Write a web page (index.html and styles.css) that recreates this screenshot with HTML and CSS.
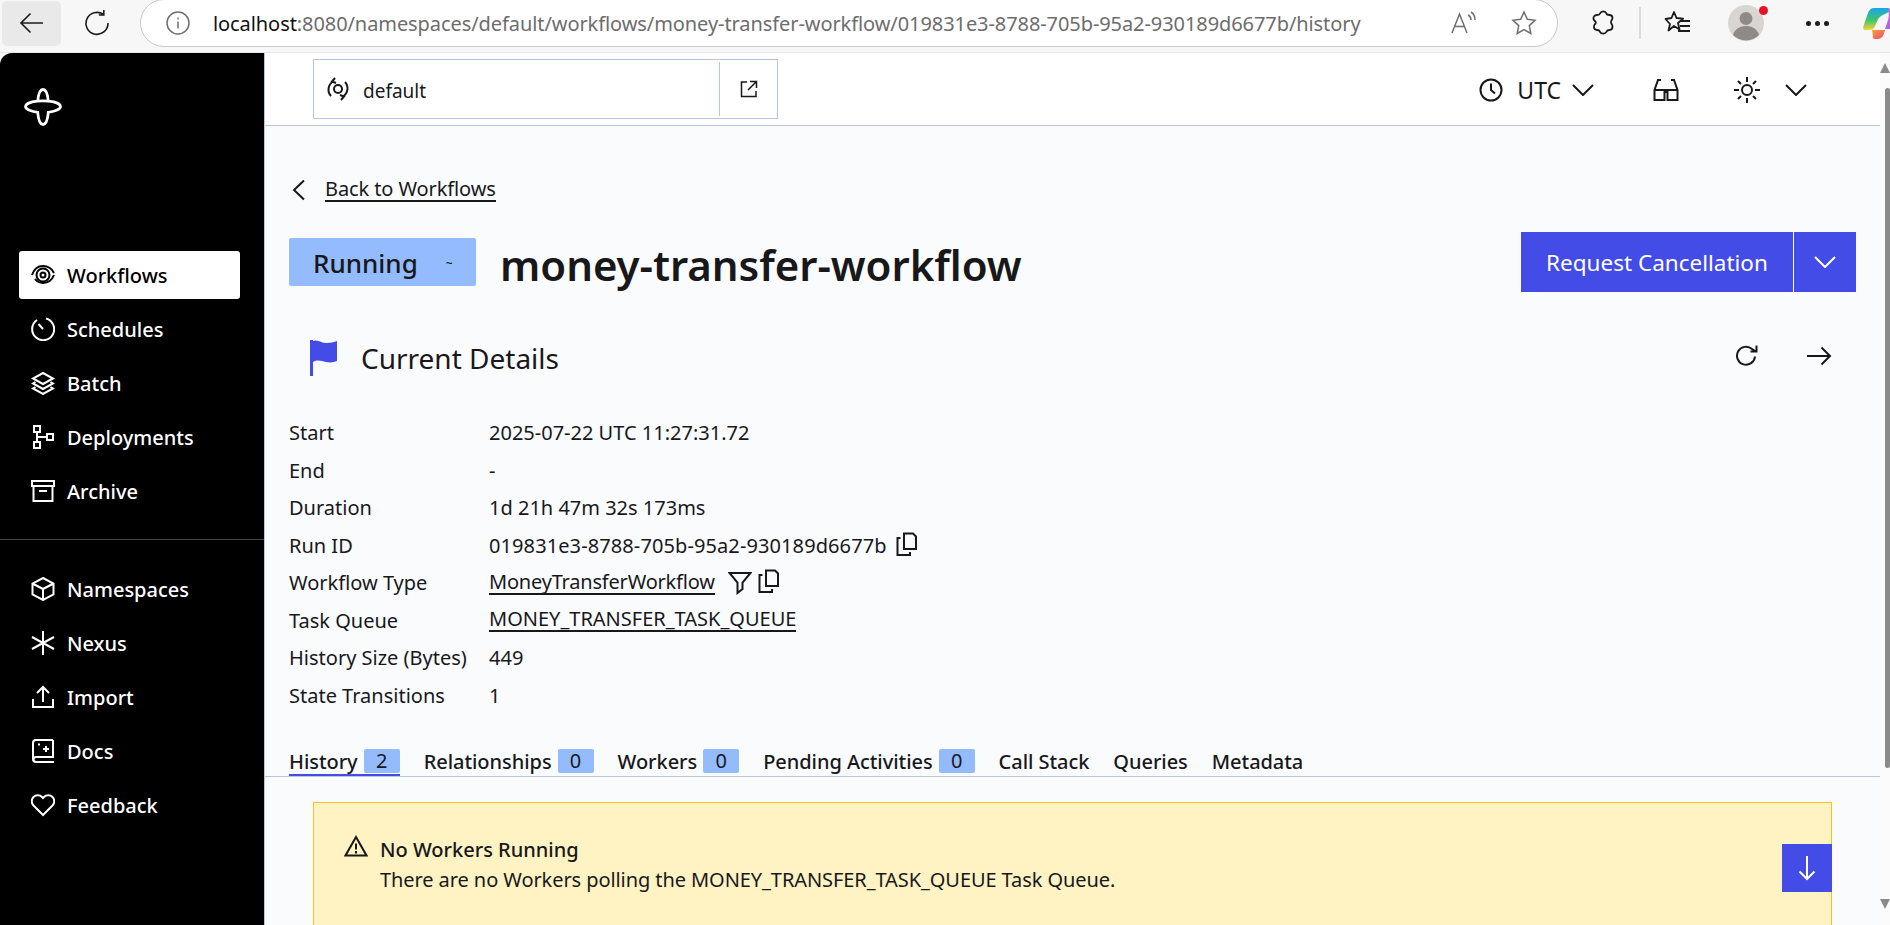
FILE: index.html
```html
<!DOCTYPE html>
<html lang="en">
<head>
<meta charset="utf-8">
<title>money-transfer-workflow</title>
<link rel="stylesheet" href="styles.css">
</head>
<body>
<div class="app">
  <header class="chrome">
    <button class="chrome-back"><svg width="28" height="28" viewBox="0 0 28 28"><path d="M25 14H3M12.500 4.500 3 14l9.500 9.500" class="ln-thin"/></svg></button>
    <span class="chrome-reload"><svg width="28" height="28" viewBox="0 0 28 28"><path d="M20.500 5.500A11 11 0 1 0 25 14M20.800 1v5h-5" class="ln-thin"/></svg></span>
    <div class="urlbar">
      <svg class="url-info" width="24" height="24" viewBox="0 0 24 24"><circle cx="12" cy="12" r="11" class="ln-gray"/><path d="M12 10.500v7M12 6.500v2" class="ln-gray"/></svg>
      <span class="url-text"><b>localhost</b>:8080/namespaces/default/workflows/money-transfer-workflow/019831e3-8788-705b-95a2-930189d6677b/history</span>
      <svg class="url-read" width="26" height="24" viewBox="0 0 26 24"><path d="M1 22 8.500 3 16 22M3.800 15.500h9.400M17 4c2 1 3 2.500 3 5M20 1c2.500 1.500 4 4 4 8" class="ln-gray"/></svg>
      <svg class="url-star" width="26" height="26" viewBox="0 0 26 26"><path d="m13 2 3.300 7.300 7.700.9-5.700 5.400 1.500 7.900L13 19.600l-6.800 3.900 1.500-7.900L2 10.200l7.700-.9z" class="ln-gray"/></svg>
    </div>
    <div class="chrome-tools">
      <svg class="tool-puzzle" width="24" height="28" viewBox="0 0 24 28"><path d="M9 4.500a3.500 3.500 0 0 1 6.500 0c.4 1.500 1.500 1.500 3 1.500 2 0 3 1 3 3s-1.500 2-1.500 4 1.500 2.500 1.500 4.500-1 3.500-3 3.500c-1.500 0-2.500.5-3 1.800-1 2.500-5.500 2.500-6.500 0-.5-1.300-1.500-1.800-3-1.800-2 0-3.500-1.500-3-4 .3-1.700 1.800-2 1.800-3.500S3 12 2.500 10 3.500 6 6 6c1.500 0 2.600-.2 3-1.500z" class="ln-dark"/></svg>
      <span class="tool-sep"></span>
      <svg class="tool-fav" width="28" height="28" viewBox="0 0 28 28"><path d="m10 3 2.500 6 6.500.7-5 4.300 1.500 6.500L10 17l-5.500 4.500L6 15 1.500 10 7.500 9zM17 12h9M16 17h10M14 22h12" class="ln-dark"/></svg>
      <span class="avatar"><svg width="36" height="36" viewBox="0 0 36 36"><circle cx="18" cy="18" r="18" fill="#d8d5d2"/><circle cx="18" cy="13.500" r="6.500" fill="#8f8a86"/><path d="M5 30c2-7 8-9 13-9s11 2 13 9a18 18 0 0 1-26 0z" fill="#8f8a86"/></svg><i class="avatar-dot"></i></span>
      <span class="tool-more"><i></i><i></i><i></i></span>
      <svg class="copilot" width="34" height="32" viewBox="0 0 34 32"><defs><linearGradient id="cp1" x1="0" y1="0" x2="0" y2="1"><stop offset="0" stop-color="#1aa3f0"/><stop offset=".55" stop-color="#3fc56b"/><stop offset="1" stop-color="#f4d43c"/></linearGradient><linearGradient id="cp2" x1="0" y1="0" x2="1" y2="1"><stop offset="0" stop-color="#ec6fc0"/><stop offset="1" stop-color="#8a5bf0"/></linearGradient><linearGradient id="cp3" x1="0" y1="0" x2="1" y2="1"><stop offset="0" stop-color="#f6a03c"/><stop offset="1" stop-color="#f04a6a"/></linearGradient></defs><path d="M11 1h14c2 0 2 2 1 4l-8 4c-3 2-4 5-6 10-1 3-3 4-6 4H2c-2 0-2-2-1.500-4L5 6c1-3 3-5 6-5z" fill="url(#cp1)"/><path d="M25 1c3 1 5 3 6 6l3 11c.5 2-1 4-3 4h-9l3-9c1-3 1-9 0-12z" fill="url(#cp2)"/><path d="M9 23h13c-1 5-3 9-7 9h-3c-2 0-3-2-2-3z" fill="url(#cp3)"/></svg>
    </div>
  </header>

  <div class="layout">
    <aside class="sidebar">
      <div class="logo"><svg width="38" height="38" viewBox="0 0 38 38"><path d="M19 1.500c3.500 0 4.800 6 5.300 11.700 5.700.5 12.200 2.300 12.200 5.300s-6.500 5.300-12.200 5.800c-.5 5.700-1.800 12.200-5.300 12.200s-4.800-6.500-5.300-12.200C8 23.800 1.500 21.500 1.500 18.500s6.500-4.800 12.200-5.300c.5-5.700 1.800-11.700 5.300-11.700zM13.700 13.200c3.400-.4 7.200-.4 10.600 0" class="ln-logo"/></svg></div>
      <nav class="nav">
        <a class="nav-item active"><svg class="nav-icon" width="24" height="24" viewBox="0 0 24 24"><path d="M1 12C3 6 7 3 12 3s9 3 11 7" class="ln"/><path d="M23 12c-2 5-6 8-11 8-3 0-6-1.500-8-4" class="ln"/><circle cx="12" cy="12" r="6.500" class="ln"/><circle cx="12" cy="12" r="2.500" class="ln"/></svg>Workflows</a>
        <a class="nav-item"><svg class="nav-icon" width="24" height="24" viewBox="0 0 24 24"><path d="M15 1.500A11 11 0 1 1 6 3M7.500 7l4.500 5" class="ln"/></svg>Schedules</a>
        <a class="nav-item"><svg class="nav-icon" width="24" height="24" viewBox="0 0 24 24"><path d="m12 2 10 5.500-10 5.500L2 7.500zM4.500 11 2 12.500 12 18l10-5.500-2.500-1.500M4.500 16 2 17.500 12 23l10-5.500-2.500-1.500" class="ln"/></svg>Batch</a>
        <a class="nav-item"><svg class="nav-icon" width="24" height="24" viewBox="0 0 24 24"><path d="M3 1h6v6H3zM3 17h6v6H3zM16 9h6v6h-6zM6 7v10M6 12h10" class="ln"/></svg>Deployments</a>
        <a class="nav-item"><svg class="nav-icon" width="24" height="24" viewBox="0 0 24 24"><path d="M1 2h22v5H1zM2.500 7v15h19V7M8 12h8" class="ln"/></svg>Archive</a>
      </nav>
      <div class="nav-divider"></div>
      <nav class="nav">
        <a class="nav-item"><svg class="nav-icon" width="24" height="24" viewBox="0 0 24 24"><path d="m12 1 10.500 5.500v11L12 23 1.500 17.500v-11zM1.500 6.500 12 12l10.500-5.500M12 12v11" class="ln"/></svg>Namespaces</a>
        <a class="nav-item"><svg class="nav-icon" width="24" height="24" viewBox="0 0 24 24"><path d="M12 0v24M1 6l22 12M23 6 1 18" class="ln"/></svg>Nexus</a>
        <a class="nav-item"><svg class="nav-icon" width="24" height="24" viewBox="0 0 24 24"><path d="M12 17V2M6 8l6-6 6 6M2 14v8h20v-8" class="ln"/></svg>Import</a>
        <a class="nav-item"><svg class="nav-icon" width="24" height="24" viewBox="0 0 24 24"><path d="M22 1H5a3 3 0 0 0-3 3v16a3 3 0 0 0 3 3h18M22 1v17H5a2.500 2.500 0 0 0 0 5M15 7v6M12 10h6M8 4.500v2" class="ln"/></svg>Docs</a>
        <a class="nav-item"><svg class="nav-icon" width="24" height="24" viewBox="0 0 24 24"><path d="M12 22 2.500 12.500a6 6 0 0 1 0-8.500 6 6 0 0 1 8.500 0l1 1 1-1a6 6 0 0 1 8.500 8.500z" class="ln"/></svg>Feedback</a>
      </nav>
    </aside>

    <main class="main">
      <div class="topbar">
        <div class="ns-box">
          <div class="ns-name">
            <svg width="24" height="26" viewBox="0 0 24 26"><circle cx="12" cy="13" r="4" class="ln"/><path d="M5 20a9.500 9.500 0 0 1 2-14.500M19 6a9.500 9.500 0 0 1-2 14.500M9 2 6 5.500l4 1.500M15 24l3-3.500-4-1.500" class="ln"/></svg>
            <span>default</span>
          </div>
          <div class="ns-open"><svg width="18" height="18" viewBox="0 0 18 18"><path d="M7 2H1.500v14.500H16V11M10 1.500h6.500V8M16.500 1.500 8 10" class="ln-thin2"/></svg></div>
        </div>
        <div class="top-actions">
          <svg class="ic-clock" width="24" height="24" viewBox="0 0 24 24"><circle cx="12" cy="12" r="10.500" class="ln"/><path d="M12 5.500V12l4 3.500" class="ln"/></svg>
          <span class="utc">UTC</span>
          <svg class="ic-chev" width="22" height="12" viewBox="0 0 22 12"><path d="m1 1 10 10L21 1" class="ln"/></svg>
          <svg class="ic-glasses" width="26" height="22" viewBox="0 0 26 22"><path d="M8 1H5L1.500 11v10h10v-8h3v8h10V11L21 1h-3M1.500 11h23" class="ln"/></svg>
          <svg class="ic-sun" width="26" height="26" viewBox="0 0 26 26"><circle cx="13" cy="13" r="5" class="ln"/><path d="M13 0v5M13 21v5M0 13h5M21 13h5M4 4l3 3M19 19l3 3M22 4l-3 3M7 19l-3 3" class="ln"/></svg>
          <svg class="ic-chev2" width="22" height="12" viewBox="0 0 22 12"><path d="m1 1 10 10L21 1" class="ln"/></svg>
        </div>
      </div>

      <div class="content">
        <a class="back"><svg width="14" height="22" viewBox="0 0 14 22"><path d="M12 1.500 2 11l10 9.500" class="ln"/></svg><span>Back to Workflows</span></a>

        <div class="title-row">
          <span class="status">Running<small>~</small></span>
          <h1>money-transfer-workflow</h1>
          <div class="split-btn"><span class="btn-main">Request Cancellation</span><span class="btn-caret"><svg width="22" height="12" viewBox="0 0 22 12"><path d="m1 1 10 10L21 1" class="ln"/></svg></span></div>
        </div>

        <div class="current-row">
          <svg class="flag" width="32" height="36" viewBox="0 0 32 36"><path d="M1 0h3v36H1z" fill="#444ce7"/><path d="M4 1c5-2 8 2 13 2 5 0 8-1 11-2v20c-3 1-6 2-11 1-5-1-8-3-13 0z" fill="#444ce7"/></svg>
          <h2>Current Details</h2>
          <div class="current-actions">
            <svg width="24" height="24" viewBox="0 0 24 24"><path d="M20 12.500A9 9 0 1 1 17 5l4 2.500M21.500 1.500v6h-6" class="ln"/></svg>
            <svg width="26" height="20" viewBox="0 0 26 20"><path d="M1 10h23M15.500 1.500 24 10l-8.500 8.500" class="ln"/></svg>
          </div>
        </div>

        <dl class="details">
          <div class="d-row"><dt>Start</dt><dd>2025-07-22 UTC 11:27:31.72</dd></div>
          <div class="d-row"><dt>End</dt><dd>-</dd></div>
          <div class="d-row"><dt>Duration</dt><dd>1d 21h 47m 32s 173ms</dd></div>
          <div class="d-row"><dt>Run ID</dt><dd class="run-id">019831e3-8788-705b-95a2-930189d6677b<svg class="copy" width="22" height="24" viewBox="0 0 22 24"><path d="M8 1.500h9l3 3V17H8zM4.500 6H1.500v17H14v-3" class="ln"/></svg></dd></div>
          <div class="d-row"><dt>Workflow Type</dt><dd><a class="lnk lnk-tight">MoneyTransferWorkflow</a><svg class="filter" width="24" height="24" viewBox="0 0 24 24"><path d="M1.500 2h21l-8 9.500V18l-5 4V11.500z" class="ln"/></svg><svg class="copy2" width="22" height="24" viewBox="0 0 22 24"><path d="M8 1.500h9l3 3V17H8zM4.500 6H1.500v17H14v-3" class="ln"/></svg></dd></div>
          <div class="d-row"><dt>Task Queue</dt><dd><a class="lnk">MONEY_TRANSFER_TASK_QUEUE</a></dd></div>
          <div class="d-row"><dt>History Size (Bytes)</dt><dd>449</dd></div>
          <div class="d-row"><dt>State Transitions</dt><dd>1</dd></div>
        </dl>

        <div class="tabs">
          <a class="tab current">History<span class="count">2</span></a>
          <a class="tab">Relationships<span class="count">0</span></a>
          <a class="tab">Workers<span class="count">0</span></a>
          <a class="tab">Pending Activities<span class="count">0</span></a>
          <a class="tab">Call Stack</a>
          <a class="tab">Queries</a>
          <a class="tab">Metadata</a>
        </div>

        <div class="alert">
          <svg class="alert-icon" width="24" height="22" viewBox="0 0 24 22"><path d="M12 2 1.500 20.500h21zM12 8.500v6M12 16v2.500" class="ln"/></svg>
          <div class="alert-text">
            <strong>No Workers Running</strong>
            <p>There are no Workers polling the MONEY_TRANSFER_TASK_QUEUE Task Queue.</p>
          </div>
          <span class="alert-down"><svg width="18" height="26" viewBox="0 0 18 26"><path d="M9 1v23M1.500 16.500 9 24l7.500-7.500" class="ln"/></svg></span>
        </div>
      </div>
    </main>

    <div class="scrollbar">
      <i class="sb-up"></i>
      <i class="sb-thumb"></i>
      <i class="sb-down"></i>
    </div>
  </div>
</div>
</body>
</html>
```
FILE: styles.css
```css
* { box-sizing: border-box; }
html, body { margin: 0; padding: 0; height: 100%; overflow: hidden; background: #f7f7f7; }
body { font-family: "Noto Sans", "Open Sans", sans-serif; color: #18181b; font-size: 20px; }
svg { display: block; flex: none; }
a { color: inherit; }
.ln { fill: none; stroke: currentColor; stroke-width: 2; }
.ln-thin { fill: none; stroke: #1b1b1b; stroke-width: 1.600; }
.ln-thin2 { fill: none; stroke: #18181b; stroke-width: 1.500; }
.ln-gray { fill: none; stroke: #6f6f6f; stroke-width: 1.500; }
.ln-dark { fill: none; stroke: #1b1b1b; stroke-width: 1.800; stroke-linejoin: round; }
.ln-logo { fill: none; stroke: #fff; stroke-width: 2.800; }

.app { height: 925px; display: flex; flex-direction: column; overflow: hidden; }

/* browser chrome */
.chrome { height: 53px; flex: none; display: flex; align-items: center; background: #f7f7f7; border-bottom: 1px solid #e6e6e6; position: relative; }
.chrome-back { width: 59px; height: 45px; margin: 0 0 6px 2px; border: 0; border-radius: 5px; background: #e9e9e9; display: flex; align-items: center; justify-content: center; padding: 0; flex: none; }
.chrome-reload { margin: 0 0 6px 22px; flex: none; }
.urlbar { width: 1418px; flex: none; height: 48px; margin: -6px 0 0 29px; background: #fff; border: 1px solid #c8c8c8; border-radius: 24px; display: flex; align-items: center; padding: 0 0 0 25px; }
.url-text { font-size: 20px; letter-spacing: -0.08px; color: #6d6d6d; white-space: nowrap; margin-left: 23px; flex: none; }
.url-text b { font-weight: 400; color: #111; }
.url-read { margin-left: 90px; }
.url-star { margin-left: 34px; }
.chrome-tools { display: flex; align-items: center; margin: -6px 0 0 33px; flex: none; }
.tool-sep { width: 2px; height: 32px; background: #dcdcdc; margin-left: 24px; }
.tool-fav { margin-left: 23px; }
.avatar { position: relative; margin-left: 36px; display: block; }
.avatar-dot { position: absolute; right: -4px; top: 1px; width: 9px; height: 9px; border-radius: 50%; background: #e81123; }
.tool-more { display: flex; gap: 4px; margin-left: 42px; }
.tool-more i { width: 5px; height: 5px; border-radius: 50%; background: #1b1b1b; }
.copilot { margin-left: 34px; }

/* layout */
.layout { flex: 1; display: flex; min-height: 0; }
.sidebar { width: 265px; flex: none; background: #000; color: #fff; border-right: 1px solid #b6c6de; border-top-left-radius: 12px; padding-top: 35px; }
.logo { padding-left: 24px; height: 163px; }
.nav { display: flex; flex-direction: column; gap: 6px; padding: 0 24px 0 19px; }
.nav-item { height: 48px; display: flex; align-items: center; gap: 12px; padding-left: 12px; font-weight: 500; font-size: 20px; border-radius: 3px; width: 221px; }
.nav-item.active { background: #fff; color: #000; }
.nav-divider { height: 1px; background: #444; margin: 24px 0 25px; }

/* main */
.main { flex: 1; min-width: 0; background: #fafbfd; }
.topbar { height: 73px; background: #fff; border-bottom: 1px solid #b6c6de; display: flex; align-items: center; justify-content: space-between; padding: 0 0 0 48px; }
.ns-box { width: 465px; height: 60px; border: 1px solid #b6c6de; display: flex; align-items: center; }
.ns-name { flex: 1; display: flex; align-items: center; gap: 13px; padding-left: 12px; font-size: 19px; }
.ns-name span { padding-top: 3px; }
.ns-open { width: 58px; height: 54px; border-left: 1px solid #b6c6de; display: flex; align-items: center; justify-content: center; }
.top-actions { display: flex; align-items: center; margin-top: 2px; }
.utc { font-size: 23px; margin-left: 14px; }
.ic-chev { margin-left: 11px; }
.ic-glasses { margin-left: 59px; }
.ic-sun { margin-left: 55px; }
.ic-chev2 { margin-left: 25px; margin-right: 73px; }

.content { padding: 50px 24px 0; }
.back { display: flex; align-items: center; gap: 19px; height: 28px; margin-left: 3px; }
.back span { border-bottom: 2px solid #18181b; line-height: 22px; letter-spacing: -0.1px; }

.title-row { display: flex; align-items: center; height: 60px; margin-top: 28px; }
.status { width: 187px; height: 48px; background: #93bbfd; border-radius: 2px; display: flex; align-items: center; padding: 2px 0 0 24px; font-size: 26px; font-weight: 500; }
.status small { font-size: 12px; margin-left: 28px; }
h1 { margin: 6px 0 0 24px; font-size: 42px; font-weight: 600; line-height: 52px; letter-spacing: -0.05px; }
.split-btn { margin-left: auto; display: flex; height: 60px; background: #444ce7; color: #fff; }
.btn-main { width: 273px; display: flex; align-items: center; justify-content: center; font-size: 22.500px; border-right: 1px solid #fff; }
.btn-caret { width: 62px; display: flex; align-items: center; justify-content: center; }

.current-row { display: flex; align-items: center; margin-top: 44px; padding-left: 20px; height: 44px; }
h2 { margin: 0 0 0 20px; font-size: 28px; font-weight: 400; }
.current-actions { margin-left: auto; margin-bottom: 4px; display: flex; align-items: center; gap: 47px; padding-right: 24px; }

.details { margin: 34px 0 0; }
.d-row { display: flex; align-items: center; height: 37.500px; }
dt { width: 200px; }
dd { margin: 0; display: flex; align-items: center; }
.run-id { letter-spacing: 0.1px; }
.lnk { border-bottom: 2px solid #18181b; line-height: 22px; }
.lnk-tight { letter-spacing: -0.2px; }
.copy { margin-left: 9px; margin-top: -3px; }
.filter { margin-left: 13px; }
.copy2 { margin-left: 6px; margin-top: -3px; }

.tabs { display: flex; gap: 24px; margin: 33px -24px 0; padding: 0 24px; height: 30px; border-bottom: 1px solid #b6c6de; align-items: flex-start; }
.tab { display: flex; align-items: center; gap: 6px; height: 29px; padding-top: 1px; font-weight: 500; letter-spacing: -0.05px; border-bottom: 2px solid transparent; }
.tab.current { border-bottom-color: #444ce7; }
.count { width: 36px; height: 24px; border-radius: 2px; background: #93bbfd; text-align: center; line-height: 24px; font-weight: 400; }

.alert { position: relative; margin: 25px 24px 0; height: 124px; background: #fff3c4; border: 1px solid #fbbf24; border-bottom: 0; display: flex; align-items: flex-start; padding: 32px 0 0 30px; gap: 12px; }
.alert-text strong { font-weight: 500; display: block; line-height: 30px; }
.alert-text p { margin: 0; line-height: 30px; letter-spacing: -0.08px; }
.alert-down { position: absolute; right: -1px; top: 41px; width: 50px; height: 48px; background: #444ce7; color: #fff; display: flex; align-items: center; justify-content: center; }

.scrollbar { width: 10px; flex: none; background: #fbfbfb; display: flex; flex-direction: column; align-items: flex-end; padding-top: 10px; position: relative; }
.sb-up { width: 0; height: 0; border-left: 5px solid transparent; border-right: 5px solid transparent; border-bottom: 10px solid #8a8a8a; }
.sb-thumb { width: 5px; height: 680px; margin-top: 15px; background: #8a8a8a; border-radius: 3px; }
.sb-down { width: 0; height: 0; margin-top: 131px; border-left: 5px solid transparent; border-right: 5px solid transparent; border-top: 10px solid #8a8a8a; }
```
